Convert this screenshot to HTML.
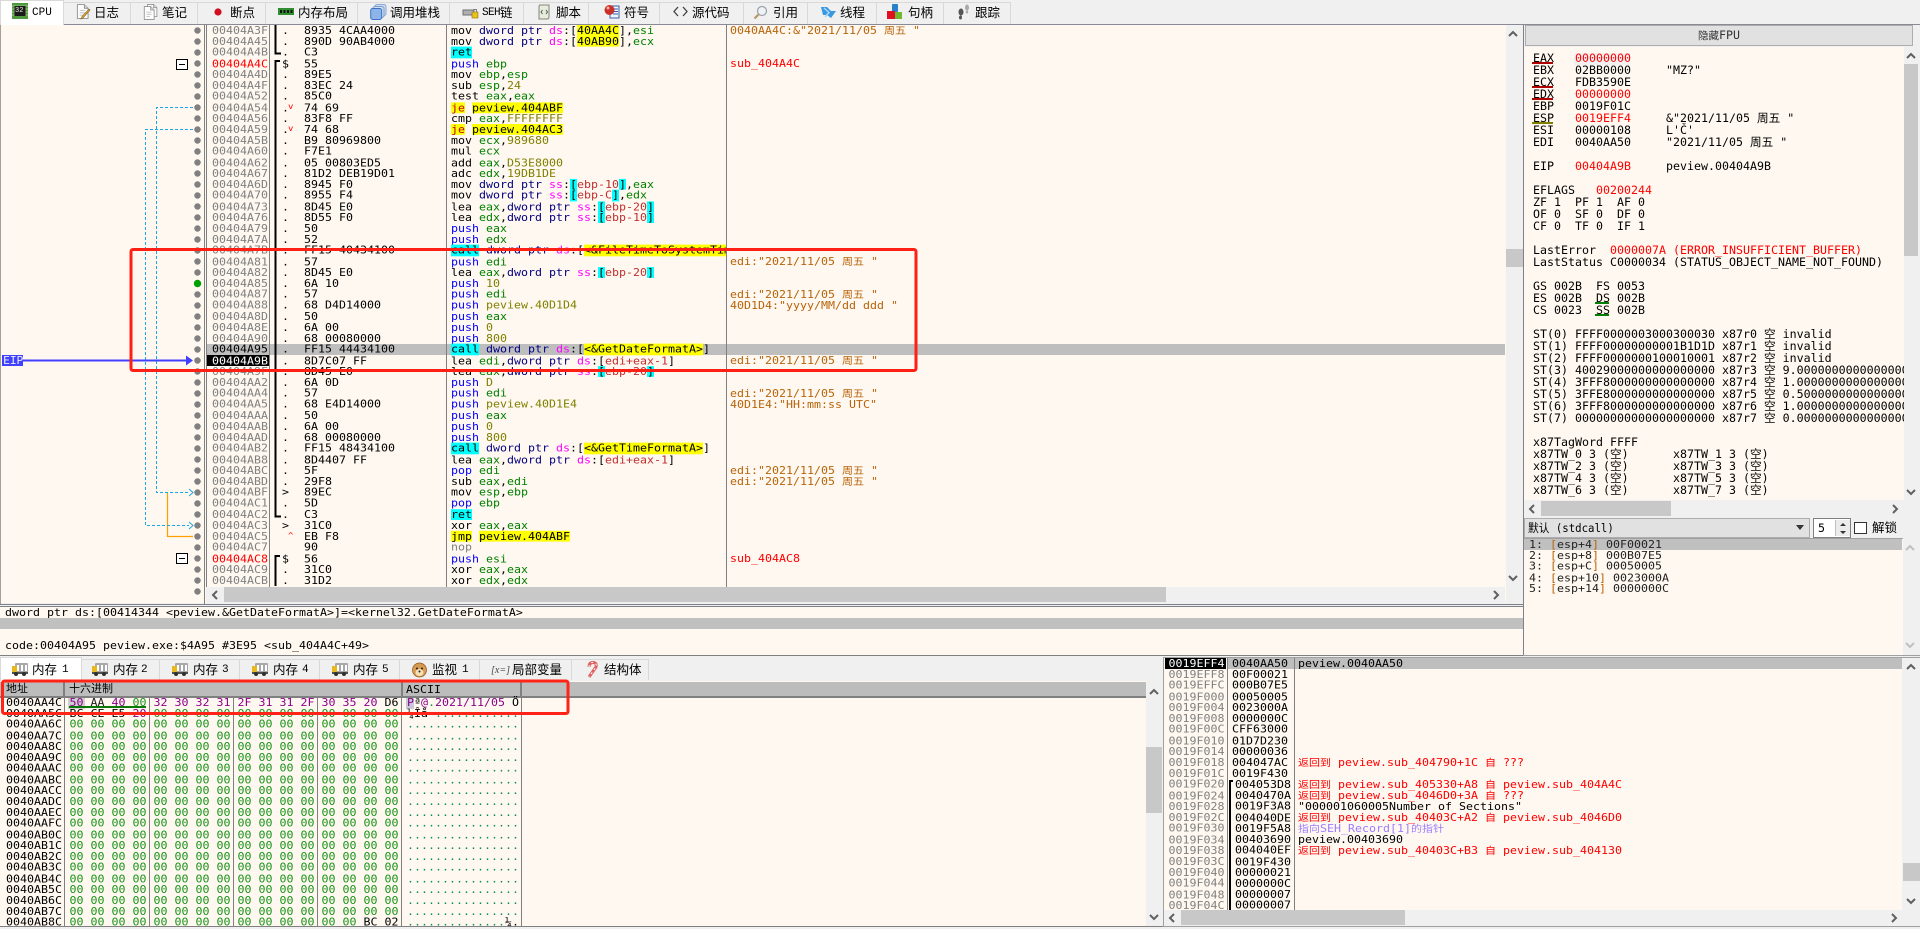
<!DOCTYPE html>
<html lang="zh"><head><meta charset="utf-8"><title>x64dbg</title>
<style>
html,body{margin:0;padding:0}
body{width:1920px;height:927px;position:relative;overflow:hidden;background:#f0f0f0;font-family:"DejaVu Sans Mono","Noto Sans CJK SC",monospace;color:#000}
div,pre,svg{position:absolute}
pre{margin:0;font:11.63px/12.22px "DejaVu Sans Mono","Noto Sans CJK SC",monospace;white-space:pre;transform:scaleY(.9);transform-origin:0 0}
.l{font:11.63px/12.22px "DejaVu Sans Mono","Noto Sans CJK SC",monospace;white-space:pre;height:12.22px;transform:scaleY(.9);transform-origin:0 0}
.rg{line-height:12px;transform:none}
i{font-style:normal}
u{font-size:11px;text-decoration:none;line-height:0}
.v{font-size:9px;line-height:0}
.g{color:#008000}.n{color:#000080}.p{color:#ff00ff}.o{color:#808000}.b{color:#0000ff}.r{color:#c03030}
.c,.y{display:inline-block;height:12.22px;line-height:12.22px}
.c{background:#00ffff}.y{background:#ffff00}
.e{color:#c00000}.red{color:#ff0000}.or{color:#b8640a}.gr{color:#808080}
.tb{box-sizing:border-box;top:2px;height:22px;border:1px solid #d9d9d9;border-bottom:0;background:#f0f0f0}
.bt{box-sizing:border-box;top:659px;height:21px;border:1px solid #d9d9d9;border-bottom:0;background:#f0f0f0}
.t{font:12.500px/14px "Liberation Sans","Noto Sans CJK SC",sans-serif;white-space:pre;top:6px}
.t2{font:12.500px/14px "Liberation Sans","Noto Sans CJK SC",sans-serif;white-space:pre;top:663px}
.m{font:11px/14px "Liberation Mono",monospace;white-space:pre}
.sb{background:#f0f0f0}.th{background:#c8c8c8}
.ln{background:#808080}
.ar{fill:none;stroke:#606060;stroke-width:2}
.h{font:11px/14px "Liberation Sans","Noto Sans CJK SC",sans-serif;white-space:pre;top:682px}
.pu{color:#8b008b}.z{color:#1a941a}.te{color:#0a8a5a}
</style></head>
<body>
<svg width="0" height="0" style="left:0;top:0"><defs>
<symbol id="bus" viewBox="0 0 16 13"><rect x="3" y="0" width="13" height="10" rx="1" fill="#a8a8a8"/><rect x="0" y="3" width="5" height="7" fill="#e8b820"/><rect x="5" y="2" width="2" height="6" fill="#fff"/><rect x="9" y="2" width="2" height="6" fill="#fff"/><rect x="13" y="2" width="2" height="6" fill="#fff"/><rect x="0" y="9" width="16" height="2" fill="#505050"/><circle cx="4" cy="11" r="2" fill="#303030"/><circle cx="12" cy="11" r="2" fill="#303030"/></symbol>
<symbol id="doc" viewBox="0 0 14 16"><path d="M1.500.5H9L13 4.500V15.500H1.500Z" fill="#fdfdfd" stroke="#909090"/><path d="M9 .5V4.500H13" fill="#d8d8d8" stroke="#909090"/><path d="M4 7H10M4 9.500H10M4 12H8" stroke="#c0c0c0"/></symbol>
</defs></svg>

<!-- top tabs -->
<div style="left:0;top:24px;width:1920px;height:1px;background:#8a8a96"></div>
<div class="tb" style="left:0;top:0;width:64px;height:25px;background:#fff"></div>
<div class="tb" style="left:63px;width:68px"></div><div class="tb" style="left:130px;width:68px"></div><div class="tb" style="left:197px;width:69px"></div><div class="tb" style="left:265px;width:93px"></div><div class="tb" style="left:357px;width:93px"></div><div class="tb" style="left:449px;width:75px"></div><div class="tb" style="left:523px;width:66px"></div><div class="tb" style="left:588px;width:72px"></div><div class="tb" style="left:659px;width:85px"></div><div class="tb" style="left:743px;width:65px"></div><div class="tb" style="left:807px;width:70px"></div><div class="tb" style="left:876px;width:68px"></div><div class="tb" style="left:943px;width:68px"></div>

<svg style="left:12px;top:3px" width="16" height="16"><rect x="0" y="0" width="16" height="16" fill="#4f9a3f"/><path d="M0 3H16M0 6H16M0 9H16M0 12H16" stroke="#b8d8a8" stroke-width=".7"/><rect x="2.500" y="3" width="11" height="10" fill="#1a1a1a"/></svg>
<div style="left:15px;top:6px;font:7px/10px 'Liberation Mono',monospace;color:#e8f0e0">32</div>
<div class="m" style="left:32px;top:6px;">CPU</div><div class="t" style="left:94px">日志</div><div class="t" style="left:162px">笔记</div><div class="t" style="left:230px">断点</div><div class="t" style="left:298px">内存布局</div><div class="t" style="left:390px">调用堆栈</div>
<div class="m" style="left:482px;top:6px;letter-spacing:-.6px">SEH</div><div class="t" style="left:500px">链</div><div class="t" style="left:556px">脚本</div><div class="t" style="left:624px">符号</div><div class="t" style="left:692px">源代码</div><div class="t" style="left:773px">引用</div><div class="t" style="left:840px">线程</div><div class="t" style="left:908px">句柄</div><div class="t" style="left:975px">跟踪</div>

<svg style="left:76px;top:4px" width="15" height="16"><use href="#doc" width="13" height="15"/><path d="M14 6L7 14L5 15L6 12.500L13 5Z" fill="#e8b030" stroke="#806020" stroke-width=".6"/></svg>
<svg style="left:143px;top:4px" width="15" height="16"><use href="#doc" x="3" width="12" height="13"/><use href="#doc" y="2" width="12" height="14"/></svg>
<svg style="left:214px;top:8px" width="8" height="8"><circle cx="4" cy="4" r="3.600" fill="#d01020"/></svg>
<svg style="left:278px;top:8px" width="16" height="8"><rect width="16" height="7" fill="#2f8f30"/><path d="M2 2H4V5H2ZM5.500 2H7.500V5H5.500ZM9 2H11V5H9ZM12.500 2H14.500V5H12.500Z" fill="#111"/></svg>
<svg style="left:370px;top:4px" width="17" height="17"><rect x="5" y=".5" width="11" height="11" rx="2" fill="#cfe0f5" stroke="#8aa8d0"/><rect x="3" y="2.500" width="11" height="11" rx="2" fill="#cfe0f5" stroke="#7a9ccc"/><rect x=".7" y="4.500" width="11" height="11" rx="2" fill="#8db4e8" stroke="#3d72c0"/></svg>
<svg style="left:462px;top:6px" width="17" height="13"><path d="M1 4H12V9H1Z" fill="#b0b0b0" stroke="#707070"/><rect x="10" y="6" width="6" height="6" fill="#e8c020" stroke="#907010" stroke-width=".6"/><path d="M11.500 6V3.500H14.500V6" fill="none" stroke="#808080"/></svg>
<svg style="left:537px;top:4px" width="14" height="16"><path d="M3 1H12V13Q12 15 10 15H2V3Q2 1 3 1Z" fill="#e8ecdc" stroke="#808878"/><path d="M5.500 6L4 8L5.500 10M9 6L10.500 8L9 10" fill="none" stroke="#505860"/></svg>
<svg style="left:604px;top:3px" width="16" height="17"><rect x="6" y="3" width="9" height="12" fill="#f0f4fb" stroke="#3a5fa8"/><path d="M9 6H14M9 8.500H14M9 11H14" stroke="#3a5fa8"/><circle cx="5.500" cy="7" r="5" fill="#c83028"/><circle cx="4" cy="5" r="1.500" fill="#f0b0a0"/></svg>
<svg style="left:673px;top:6px" width="15" height="11"><path d="M5 1L1 5.500L5 10M10 1L14 5.500L10 10" fill="none" stroke="#404040" stroke-width="1.300"/></svg>
<svg style="left:753px;top:5px" width="15" height="15"><circle cx="9" cy="6" r="4.500" fill="#eef2f6" stroke="#98a0a8" stroke-width="1.200"/><path d="M5.500 9.500L1.500 13.500" stroke="#b89868" stroke-width="2.200"/></svg>
<svg style="left:820px;top:6px" width="17" height="14"><path d="M1 1H7L11 5H16L11 12L7 9L3 9Z" fill="#3a98e0"/><path d="M4 2L9 6.500L5 11" fill="none" stroke="#a8d8f8" stroke-width="1.500"/></svg>
<svg style="left:887px;top:4px" width="17" height="16"><rect x="5" y="0" width="6" height="8" rx="1" fill="#2880c8"/><rect x="0" y="7" width="8" height="8" fill="#e01020"/><rect x="8" y="8" width="7" height="7" fill="#70b830"/></svg>
<svg style="left:957px;top:4px" width="15" height="16"><ellipse cx="4" cy="8" rx="2.500" ry="3.500" fill="#555"/><ellipse cx="3.500" cy="13.500" rx="1.500" ry="2" fill="#555"/><ellipse cx="10" cy="3.500" rx="2" ry="3" fill="#aaa"/><ellipse cx="10" cy="8" rx="1.200" ry="1.500" fill="#aaa"/></svg>

<!-- disasm panel -->
<div style="left:1px;top:25px;width:1505px;height:578px;background:#fff8f0"></div>
<div style="left:0;top:25px;width:1px;height:579px;background:#a0a0a0"></div>
<div style="left:206px;top:344px;width:1299px;height:11px;background:#bebebe"></div>
<div style="left:207px;top:355px;width:62px;height:11px;background:#000"></div>
<div class="sb" style="left:206px;top:587px;width:1299px;height:16px"></div>
<div class="th" style="left:224px;top:587px;width:942px;height:15px"></div>
<svg style="left:211px;top:590px" width="9" height="10"><path class="ar" d="M6 1L2 5L6 9"/></svg>
<svg style="left:1492px;top:590px" width="9" height="10"><path class="ar" d="M2 1L6 5L2 9"/></svg>
<div class="sb" style="left:1506px;top:25px;width:17px;height:579px"></div>
<div class="th" style="left:1506px;top:249px;width:17px;height:18px"></div>
<svg style="left:1508px;top:30px" width="10" height="8"><path class="ar" d="M1 6L5 2L9 6"/></svg>
<svg style="left:1508px;top:574px" width="10" height="8"><path class="ar" d="M1 2L5 6L9 2"/></svg>
<div class="ln" style="left:204px;top:25px;width:1px;height:579px"></div><div class="ln" style="left:206px;top:25px;width:1px;height:562px"></div>
<div class="ln" style="left:269px;top:25px;width:1px;height:562px"></div>
<div class="ln" style="left:446px;top:25px;width:1px;height:562px"></div>
<div class="ln" style="left:726px;top:25px;width:1px;height:562px"></div>
<div style="left:0;top:604px;width:1523px;height:1px;background:#7e8088"></div>
<div style="left:0;top:606px;width:1523px;height:1px;background:#7e8088"></div>

<pre class="gr" style="left:212px;top:25px">00404A3F
00404A45
00404A4B
<i class="red">00404A4C</i>
00404A4D
00404A4F
00404A52
00404A54
00404A56
00404A59
00404A5B
00404A60
00404A62
00404A67
00404A6D
00404A70
00404A73
00404A76
00404A79
00404A7A
00404A7B
00404A81
00404A82
00404A85
00404A87
00404A88
00404A8D
00404A8E
00404A90
<i style="color:#000">00404A95</i>
<i style="color:#fff">00404A9B</i>
00404A9F
00404AA2
00404AA4
00404AA5
00404AAA
00404AAB
00404AAD
00404AB2
00404AB8
00404ABC
00404ABD
00404ABF
00404AC1
00404AC2
00404AC3
00404AC5
00404AC7
<i class="red">00404AC8</i>
00404AC9
00404ACB</pre>
<pre style="left:282px;top:25px">.
.
.
$
.
.
.
. <i class="red v"></i>
.
. <i class="red v"></i>
.
.
.
.
.
.
.
.
.
.
.
.
.
.
.
.
.
.
.
.
.
.
.
.
.
.
.
.
.
.
.
.
&gt;
.
.
&gt;


$
.
.</pre>
<div class="l red" style="left:288px;top:102px;font-size:9px">v</div>
<div class="l red" style="left:288px;top:124px;font-size:9px">v</div>
<div class="l red" style="left:288px;top:531px;font-size:9px">^</div>
<pre style="left:304px;top:25px">8935 4CAA4000
890D 90AB4000
C3
55
89E5
83EC 24
85C0
74 69
83F8 FF
74 68
B9 80969800
F7E1
05 00803ED5
81D2 DEB19D01
8945 F0
8955 F4
8D45 E0
8D55 F0
50
52
FF15 40434100
57
8D45 E0
6A 10
57
68 D4D14000
50
6A 00
68 00080000
FF15 44434100
8D7C07 FF
8D45 E0
6A 0D
57
68 E4D14000
50
6A 00
68 00080000
FF15 48434100
8D4407 FF
5F
29F8
89EC
5D
C3
31C0
EB F8
90
56
31C0
31D2</pre>
<div style="left:451px;top:25px;width:275px;height:562px;overflow:hidden"><pre style="left:0;top:0">mov <i class="n">dword ptr</i> <i class="p">ds</i>:[<i class="y">40AA4C</i>],<i class="g">esi</i>
mov <i class="n">dword ptr</i> <i class="p">ds</i>:[<i class="y">40AB90</i>],<i class="g">ecx</i>
<i class="c">ret</i>
<i class="b">push</i> <i class="g">ebp</i>
mov <i class="g">ebp</i>,<i class="g">esp</i>
sub <i class="g">esp</i>,<i class="o">24</i>
test <i class="g">eax</i>,<i class="g">eax</i>
<i class="y e">je</i> <i class="y">peview.404ABF</i>
cmp <i class="g">eax</i>,<i class="o">FFFFFFFF</i>
<i class="y e">je</i> <i class="y">peview.404AC3</i>
mov <i class="g">ecx</i>,<i class="o">989680</i>
mul <i class="g">ecx</i>
add <i class="g">eax</i>,<i class="o">D53E8000</i>
adc <i class="g">edx</i>,<i class="o">19DB1DE</i>
mov <i class="n">dword ptr</i> <i class="p">ss</i>:<i class="c">[</i><i class="r">ebp-10</i><i class="c">]</i>,<i class="g">eax</i>
mov <i class="n">dword ptr</i> <i class="p">ss</i>:<i class="c">[</i><i class="r">ebp-C</i><i class="c">]</i>,<i class="g">edx</i>
lea <i class="g">eax</i>,<i class="n">dword ptr</i> <i class="p">ss</i>:<i class="c">[</i><i class="r">ebp-20</i><i class="c">]</i>
lea <i class="g">edx</i>,<i class="n">dword ptr</i> <i class="p">ss</i>:<i class="c">[</i><i class="r">ebp-10</i><i class="c">]</i>
<i class="b">push</i> <i class="g">eax</i>
<i class="b">push</i> <i class="g">edx</i>
<i class="c">call</i> <i class="n">dword ptr</i> <i class="p">ds</i>:[<i class="y">&lt;&amp;FileTimeToSystemTime&gt;</i>]
<i class="b">push</i> <i class="g">edi</i>
lea <i class="g">eax</i>,<i class="n">dword ptr</i> <i class="p">ss</i>:<i class="c">[</i><i class="r">ebp-20</i><i class="c">]</i>
<i class="b">push</i> <i class="o">10</i>
<i class="b">push</i> <i class="g">edi</i>
<i class="b">push</i> <i class="o">peview.40D1D4</i>
<i class="b">push</i> <i class="g">eax</i>
<i class="b">push</i> <i class="o">0</i>
<i class="b">push</i> <i class="o">800</i>
<i class="c">call</i> <i class="n">dword ptr</i> <i class="p">ds</i>:[<i class="y">&lt;&amp;GetDateFormatA&gt;</i>]
lea <i class="g">edi</i>,<i class="n">dword ptr</i> <i class="p">ds</i>:[<i class="r">edi+eax-1</i>]
lea <i class="g">eax</i>,<i class="n">dword ptr</i> <i class="p">ss</i>:<i class="c">[</i><i class="r">ebp-20</i><i class="c">]</i>
<i class="b">push</i> <i class="o">D</i>
<i class="b">push</i> <i class="g">edi</i>
<i class="b">push</i> <i class="o">peview.40D1E4</i>
<i class="b">push</i> <i class="g">eax</i>
<i class="b">push</i> <i class="o">0</i>
<i class="b">push</i> <i class="o">800</i>
<i class="c">call</i> <i class="n">dword ptr</i> <i class="p">ds</i>:[<i class="y">&lt;&amp;GetTimeFormatA&gt;</i>]
lea <i class="g">eax</i>,<i class="n">dword ptr</i> <i class="p">ds</i>:[<i class="r">edi+eax-1</i>]
<i class="b">pop</i> <i class="g">edi</i>
sub <i class="g">eax</i>,<i class="g">edi</i>
mov <i class="g">esp</i>,<i class="g">ebp</i>
<i class="b">pop</i> <i class="g">ebp</i>
<i class="c">ret</i>
xor <i class="g">eax</i>,<i class="g">eax</i>
<i class="y">jmp</i> <i class="y">peview.404ABF</i>
<i class="gr">nop</i>
<i class="b">push</i> <i class="g">esi</i>
xor <i class="g">eax</i>,<i class="g">eax</i>
xor <i class="g">edx</i>,<i class="g">edx</i></pre></div>

<div class="l or" style="left:730px;top:25px">0040AA4C:&amp;"2021/11/05 <u>周五</u> "</div>
<div class="l red" style="left:730px;top:58px">sub_404A4C</div>
<div class="l or" style="left:730px;top:256px">edi:"2021/11/05 <u>周五</u> "</div>
<div class="l or" style="left:730px;top:289px">edi:"2021/11/05 <u>周五</u> "</div>
<div class="l or" style="left:730px;top:300px">40D1D4:"yyyy/MM/dd ddd "</div>
<div class="l or" style="left:730px;top:355px">edi:"2021/11/05 <u>周五</u> "</div>
<div class="l or" style="left:730px;top:388px">edi:"2021/11/05 <u>周五</u> "</div>
<div class="l or" style="left:730px;top:399px">40D1E4:"HH:mm:ss UTC"</div>
<div class="l or" style="left:730px;top:465px">edi:"2021/11/05 <u>周五</u> "</div>
<div class="l or" style="left:730px;top:476px">edi:"2021/11/05 <u>周五</u> "</div>
<div class="l red" style="left:730px;top:553px">sub_404AC8</div>

<div style="left:2px;top:355px;width:21px;height:11px;background:#4040ff"></div>
<pre style="left:3px;top:355px;color:#e8e8ff;letter-spacing:-.3px">EIP</pre>

<!-- info box -->
<div style="left:0;top:607px;width:1523px;height:48px;background:#fff8f0;border-bottom:1px solid #808080"></div>
<div style="left:0;top:618px;width:1523px;height:11px;background:#c0c0c0"></div>
<div class="l" style="left:5px;top:607px">dword ptr ds:[00414344 &lt;peview.&amp;GetDateFormatA&gt;]=&lt;kernel32.GetDateFormatA&gt;</div>
<div class="l" style="left:5px;top:640px">code:00404A95 peview.exe:$4A95 #3E95 &lt;sub_404A4C+49&gt;</div>
<div style="left:1523px;top:25px;width:1px;height:630px;background:#808088"></div>

<!-- right: FPU button + registers -->
<div style="left:1525px;top:25px;width:388px;height:21px;box-sizing:border-box;background:#e1e1e1;border:1px solid #adadad;font:11.630px/19px 'DejaVu Sans Mono','Noto Sans CJK SC',monospace;text-align:center;color:#333"><u style="font-size:10.500px">隐藏</u>FPU</div>
<div style="left:1524px;top:47px;width:380px;height:453px;background:#fff8f0;overflow:hidden">
<div style="left:50px;top:6px;width:56px;height:12px;background:#f0f0f0"></div>
<pre class="rg" style="left:9px;top:5px">EAX   <i class="red">00000000</i>
EBX   02BB0000     "MZ?"
ECX   FDB3590E
EDX   <i class="red">00000000</i>
EBP   0019F01C
ESP   <i class="red">0019EFF4</i>     &amp;"2021/11/05 周五 "
ESI   00000108     L'Č'
EDI   0040AA50     "2021/11/05 周五 "

EIP   <i class="red">00404A9B</i>     peview.00404A9B

EFLAGS   <i class="red">00200244</i>
ZF 1  PF 1  AF 0
OF 0  SF 0  DF 0
CF 0  TF 0  IF 1

LastError  <i class="red">0000007A (ERROR_INSUFFICIENT_BUFFER)</i>
LastStatus C0000034 (STATUS_OBJECT_NAME_NOT_FOUND)

GS 002B  FS 0053
ES 002B  DS 002B
CS 0023  SS 002B

ST(0) FFFF0000003000300030 x87r0 空 invalid
ST(1) FFFF00000000001B1D1D x87r1 空 invalid
ST(2) FFFF0000000100010001 x87r2 空 invalid
ST(3) 40029000000000000000 x87r3 空 9.0000000000000000000
ST(4) 3FFF8000000000000000 x87r4 空 1.0000000000000000000
ST(5) 3FFE8000000000000000 x87r5 空 0.5000000000000000000
ST(6) 3FFF8000000000000000 x87r6 空 1.0000000000000000000
ST(7) 00000000000000000000 x87r7 空 0.0000000000000000000

x87TagWord FFFF
x87TW_0 3 (空)
x87TW_2 3 (空)
x87TW_4 3 (空)
x87TW_6 3 (空)</pre>
<pre class="rg" style="left:149px;top:401px">x87TW_1 3 (空)
x87TW_3 3 (空)
x87TW_5 3 (空)
x87TW_7 3 (空)</pre>
</div>
<div style="left:1532px;top:62px;width:21px;height:2px;background:#b00000"></div>
<div style="left:1532px;top:86px;width:21px;height:2px;background:#b00000"></div>
<div style="left:1532px;top:98px;width:21px;height:2px;background:#b00000"></div>
<div style="left:1532px;top:122px;width:21px;height:2px;background:#808000"></div>
<div style="left:1595px;top:302px;width:14px;height:2px;background:#008000"></div>
<div style="left:1595px;top:314px;width:14px;height:2px;background:#008000"></div>
<div class="th" style="left:1904px;top:64px;width:14px;height:192px"></div>
<svg style="left:1906px;top:52px" width="10" height="8"><path class="ar" d="M1 6L5 2L9 6"/></svg>
<svg style="left:1906px;top:488px" width="10" height="8"><path class="ar" d="M1 2L5 6L9 2"/></svg>
<div class="th" style="left:1541px;top:501px;width:130px;height:15px"></div>
<svg style="left:1528px;top:504px" width="9" height="10"><path class="ar" d="M6 1L2 5L6 9"/></svg>
<svg style="left:1891px;top:504px" width="9" height="10"><path class="ar" d="M2 1L6 5L2 9"/></svg>
<!-- combo row -->
<div style="left:1524px;top:518px;width:286px;height:20px;box-sizing:border-box;background:#e1e1e1;border:1px solid #adadad"></div>
<div style="left:1528px;top:520px;font:11.500px/16px 'DejaVu Sans Mono','Noto Sans CJK SC',monospace;white-space:pre;transform:scaleX(.93);transform-origin:0 0">默认 (stdcall)</div>
<svg style="left:1796px;top:525px" width="9" height="6"><path d="M0 0H8L4 5Z" fill="#333"/></svg>
<div style="left:1813px;top:518px;width:38px;height:20px;box-sizing:border-box;background:#fff;border:1px solid #808080"></div>
<div style="left:1818px;top:521px;font:11.630px/14px 'DejaVu Sans Mono',monospace">5</div>
<div style="left:1835px;top:520px;width:14px;height:16px;background:#ececec;border-left:1px solid #c0c0c0"></div>
<svg style="left:1838px;top:522px" width="10" height="13"><path d="M5 1L8 4H2ZM5 12L8 9H2Z" fill="#333"/></svg>
<div style="left:1854px;top:522px;width:13px;height:12px;box-sizing:border-box;background:#fff;border:1px solid #333"></div>
<div class="t" style="left:1872px;top:521px">解锁</div>
<!-- args -->
<div style="left:1524px;top:538px;width:379px;height:117px;background:#fff8f0;border-top:1px solid #a0a0a0"></div>
<div style="left:1524px;top:539px;width:378px;height:11px;background:#c0c0c0"></div>
<pre style="left:1529px;top:539px;color:#222">1: <i class="or">[</i>esp+4<i class="or">]</i> 00F00021
2: <i class="or">[</i>esp+8<i class="or">]</i> 000B07E5
3: <i class="or">[</i>esp+C<i class="or">]</i> 00050005
4: <i class="or">[</i>esp+10<i class="or">]</i> 0023000A
5: <i class="or">[</i>esp+14<i class="or">]</i> 0000000C</pre>
<svg style="left:1905px;top:544px" width="10" height="8"><path d="M1 6L5 2L9 6" fill="none" stroke="#c0c0c0" stroke-width="2"/></svg>
<svg style="left:1905px;top:641px" width="10" height="8"><path d="M1 2L5 6L9 2" fill="none" stroke="#c0c0c0" stroke-width="2"/></svg>
<div style="left:1523px;top:655px;width:397px;height:1px;background:#a0a0a0"></div>

<!-- lower tabs -->
<div class="bt" style="left:0;top:657px;width:82px;height:24px;background:#fff"></div>
<div class="bt" style="left:81px;width:79px"></div><div class="bt" style="left:159px;width:81px"></div><div class="bt" style="left:239px;width:81px"></div><div class="bt" style="left:319px;width:81px"></div><div class="bt" style="left:399px;width:81px"></div><div class="bt" style="left:479px;width:93px"></div><div class="bt" style="left:571px;width:78px"></div>
<svg style="left:12px;top:663px" width="16" height="13"><use href="#bus"/></svg><svg style="left:92px;top:663px" width="16" height="13"><use href="#bus"/></svg><svg style="left:172px;top:663px" width="16" height="13"><use href="#bus"/></svg><svg style="left:252px;top:663px" width="16" height="13"><use href="#bus"/></svg><svg style="left:332px;top:663px" width="16" height="13"><use href="#bus"/></svg>
<div class="t2" style="left:32px">内存</div><div class="m" style="left:62px;top:663px">1</div>
<div class="t2" style="left:113px">内存</div><div class="m" style="left:141px;top:663px">2</div>
<div class="t2" style="left:193px">内存</div><div class="m" style="left:222px;top:663px">3</div>
<div class="t2" style="left:273px">内存</div><div class="m" style="left:302px;top:663px">4</div>
<div class="t2" style="left:353px">内存</div><div class="m" style="left:382px;top:663px">5</div>
<svg style="left:411px;top:661px" width="17" height="17"><circle cx="8.500" cy="9" r="7" fill="#d89a50" stroke="#8a5a20" stroke-width=".7"/><ellipse cx="8.500" cy="11.500" rx="4" ry="3.500" fill="#f8e0b8"/><circle cx="6" cy="7.500" r="1" fill="#222"/><circle cx="11" cy="7.500" r="1" fill="#222"/><circle cx="8.500" cy="10.500" r="1" fill="#222"/></svg>
<div class="t2" style="left:432px">监视</div><div class="m" style="left:462px;top:663px">1</div>
<div style="left:491px;top:664px;font:italic 10px/13px 'Liberation Serif',serif;color:#444;white-space:pre">[<i style="font-style:italic">x</i>=]</div>
<div class="t2" style="left:512px">局部变量</div>
<svg style="left:586px;top:661px" width="13" height="17"><path d="M3 6Q3 1.500 7 1.500Q11 1.500 10 6L3 16" fill="none" stroke="#e06060" stroke-width="3"/><path d="M3 6Q3 1.500 7 1.500Q11 1.500 10 6L3 16" fill="none" stroke="#fff" stroke-width="1" stroke-dasharray="2 3"/></svg>
<div class="t2" style="left:604px">结构体</div>

<!-- memory -->
<div style="left:0;top:681px;width:1146px;height:246px;background:#fff8f0"></div>
<div style="left:0;top:682px;width:1146px;height:14px;background:#bcbcbc"></div>
<div class="ln" style="left:0;top:696px;width:1146px;height:2px"></div>
<div class="h" style="left:6px">地址</div><div class="h" style="left:69px">十六进制</div>
<pre style="left:406px;top:684px">ASCII</pre>
<div class="ln" style="left:63px;top:682px;width:2px;height:15px"></div>
<div class="ln" style="left:401px;top:682px;width:2px;height:15px"></div>
<div class="ln" style="left:520px;top:682px;width:2px;height:15px"></div>
<div class="ln" style="left:64px;top:697px;width:1px;height:230px"></div>
<div class="ln" style="left:149px;top:697px;width:1px;height:230px"></div>
<div class="ln" style="left:233px;top:697px;width:1px;height:230px"></div>
<div class="ln" style="left:317px;top:697px;width:1px;height:230px"></div>
<div class="ln" style="left:401px;top:697px;width:1px;height:230px"></div>
<div class="ln" style="left:521px;top:697px;width:1px;height:230px"></div>
<div style="left:68px;top:698px;width:17px;height:11px;background:#d0d0d0"></div>
<div style="left:406px;top:698px;width:8px;height:11px;background:#c8c8d8"></div>
<div style="left:69px;top:706px;width:77px;height:2px;background:#087808"></div>
<pre style="left:6px;top:697px">0040AA4C
0040AA5C
0040AA6C
0040AA7C
0040AA8C
0040AA9C
0040AAAC
0040AABC
0040AACC
0040AADC
0040AAEC
0040AAFC
0040AB0C
0040AB1C
0040AB2C
0040AB3C
0040AB4C
0040AB5C
0040AB6C
0040AB7C
0040AB8C</pre>
<pre class="z" style="left:69.500px;top:697px"><i class="pu">50</i> <i style="color:#222">AA</i> <i class="pu">40</i> 00 <i class="pu">32 30 32 31 2F 31 31 2F 30 35 20</i> <i style="color:#000">D6</i>
<i style="color:#000">BC CE E5</i> <i class="pu">20</i> 00 00 00 00 00 00 00 00 00 00 00 00
00 00 00 00 00 00 00 00 00 00 00 00 00 00 00 00
00 00 00 00 00 00 00 00 00 00 00 00 00 00 00 00
00 00 00 00 00 00 00 00 00 00 00 00 00 00 00 00
00 00 00 00 00 00 00 00 00 00 00 00 00 00 00 00
00 00 00 00 00 00 00 00 00 00 00 00 00 00 00 00
00 00 00 00 00 00 00 00 00 00 00 00 00 00 00 00
00 00 00 00 00 00 00 00 00 00 00 00 00 00 00 00
00 00 00 00 00 00 00 00 00 00 00 00 00 00 00 00
00 00 00 00 00 00 00 00 00 00 00 00 00 00 00 00
00 00 00 00 00 00 00 00 00 00 00 00 00 00 00 00
00 00 00 00 00 00 00 00 00 00 00 00 00 00 00 00
00 00 00 00 00 00 00 00 00 00 00 00 00 00 00 00
00 00 00 00 00 00 00 00 00 00 00 00 00 00 00 00
00 00 00 00 00 00 00 00 00 00 00 00 00 00 00 00
00 00 00 00 00 00 00 00 00 00 00 00 00 00 00 00
00 00 00 00 00 00 00 00 00 00 00 00 00 00 00 00
00 00 00 00 00 00 00 00 00 00 00 00 00 00 00 00
00 00 00 00 00 00 00 00 00 00 00 00 00 00 00 00
00 00 00 00 00 00 00 00 00 00 00 00 00 00 <i style="color:#000">BC 02</i></pre>
<pre class="te" style="left:407px;top:697px"><i class="pu">P</i><i style="color:#222">ª</i><i class="pu">@</i>.<i class="pu">2021/11/05 </i><i style="color:#000">Ö</i>
<i style="color:#000">¼Îå</i> ............
................
................
................
................
................
................
................
................
................
................
................
................
................
................
................
................
................
................
..............<i style="color:#000">¼</i><i style="color:#000">.</i></pre>
<!-- memory scrollbar -->
<div class="sb" style="left:1146px;top:681px;width:17px;height:246px"></div>
<div class="th" style="left:1146px;top:747px;width:16px;height:66px"></div>
<svg style="left:1149px;top:688px" width="10" height="8"><path class="ar" d="M1 6L5 2L9 6"/></svg>
<svg style="left:1149px;top:913px" width="10" height="8"><path class="ar" d="M1 2L5 6L9 2"/></svg>
<div style="left:0;top:926px;width:1163px;height:1px;background:#808080"></div>

<!-- stack -->
<div style="left:1163px;top:657px;width:757px;height:270px;background:#f0f0f0;box-sizing:border-box;border:1px solid #a0a0a0;border-right:0"></div>
<div style="left:1164px;top:658px;width:738px;height:252px;background:#fff8f0"></div>
<div style="left:1165px;top:658px;width:61px;height:11px;background:#000"></div>
<div style="left:1228px;top:658px;width:674px;height:11px;background:#bebebe"></div>
<div class="ln" style="left:1227px;top:658px;width:1px;height:252px"></div>
<div class="ln" style="left:1294px;top:658px;width:1px;height:252px"></div>
<pre class="gr" style="left:1168.500px;top:658px"><i style="color:#fff">0019EFF4</i>
0019EFF8
0019EFFC
0019F000
0019F004
0019F008
0019F00C
0019F010
0019F014
0019F018
0019F01C
0019F020
0019F024
0019F028
0019F02C
0019F030
0019F034
0019F038
0019F03C
0019F040
0019F044
0019F048
0019F04C</pre>
<pre style="left:1232px;top:658px">0040AA50
00F00021
000B07E5
00050005
0023000A
0000000C
CFF63000
01D7D230
00000036
004047AC
0019F430</pre>
<pre style="left:1235px;top:779px">004053D8
0040470A
0019F3A8
004040DE
0019F5A8
00403690
004040EF
0019F430
00000021
0000000C
00000007
00000007</pre>
<div style="left:1229px;top:780px;width:2px;height:130px;background:#000"></div>
<div style="left:1229px;top:780px;width:4px;height:2px;background:#000"></div>
<div class="l" style="left:1298px;top:658px">peview.0040AA50</div>
<div class="l red" style="left:1298px;top:757px"><u>返回到</u> peview.sub_404790+1C <u>自</u> ???</div>
<div class="l red" style="left:1298px;top:779px"><u>返回到</u> peview.sub_405330+A8 <u>自</u> peview.sub_404A4C</div>
<div class="l red" style="left:1298px;top:790px"><u>返回到</u> peview.sub_4046D0+3A <u>自</u> ???</div>
<div class="l" style="left:1298px;top:801px">"000001060005Number of Sections"</div>
<div class="l red" style="left:1298px;top:812px"><u>返回到</u> peview.sub_40403C+A2 <u>自</u> peview.sub_4046D0</div>
<div class="l" style="left:1298px;top:823px;color:#9a7fff"><u>指向</u>SEH_Record[1]<u>的指针</u></div>
<div class="l" style="left:1298px;top:834px">peview.00403690</div>
<div class="l red" style="left:1298px;top:845px"><u>返回到</u> peview.sub_40403C+B3 <u>自</u> peview.sub_404130</div>
<div class="th" style="left:1903px;top:863px;width:17px;height:18px"></div>
<svg style="left:1906px;top:663px" width="10" height="8"><path class="ar" d="M1 6L5 2L9 6"/></svg>
<svg style="left:1906px;top:897px" width="10" height="8"><path class="ar" d="M1 2L5 6L9 2"/></svg>
<div class="th" style="left:1181px;top:910px;width:224px;height:15px"></div>
<svg style="left:1168px;top:913px" width="9" height="10"><path class="ar" d="M6 1L2 5L6 9"/></svg>
<svg style="left:1890px;top:913px" width="9" height="10"><path class="ar" d="M2 1L6 5L2 9"/></svg>

<!-- overlay graphics -->
<svg style="left:0;top:0" width="1920" height="927">
<line x1="197.500" y1="30.500" x2="197.500" y2="592" stroke="#808080" stroke-width="6.500" stroke-linecap="round" stroke-dasharray="0 11"/>
<circle cx="197.500" cy="283.500" r="3.700" fill="#00a000"/>
<rect x="176.500" y="59.500" width="11" height="10" fill="#fff" stroke="#000"/><path d="M179 64.500H185" stroke="#000"/>
<rect x="176.500" y="553.500" width="11" height="10" fill="#fff" stroke="#000"/><path d="M179 558.500H185" stroke="#000"/>
<path d="M275.500 25V53.500H281" fill="none" stroke="#000" stroke-width="2"/>
<path d="M280 61H275.500V516.500H281" fill="none" stroke="#000" stroke-width="2"/>
<path d="M280 556H275.500V586" fill="none" stroke="#000" stroke-width="2"/>
<path d="M167.500 492.500V536.500H193" fill="none" stroke="#ffa000" stroke-width="1.200"/>
<path d="M193 107.500H156.500V492.500H189" fill="none" stroke="#1aa8e8" stroke-dasharray="3 2"/>
<path d="M193 129.500H145.500V525.500H189" fill="none" stroke="#1aa8e8" stroke-dasharray="3 2"/>
<path d="M189 489L193 492.500L189 496M189 522L193 525.500L189 529" fill="none" stroke="#1aa8e8"/>
<path d="M23 360.500H188" stroke="#4040ff" stroke-width="2"/>
<path d="M186 355.500L193 360.500L186 365.500Z" fill="#4040ff"/>
<rect x="131" y="249.500" width="785" height="121" rx="2" fill="none" stroke="#ff2015" stroke-width="3"/>
<rect x="2.500" y="681" width="565.500" height="32.500" rx="2" fill="none" stroke="#ff2417" stroke-width="3"/>
</svg>
</body></html>
